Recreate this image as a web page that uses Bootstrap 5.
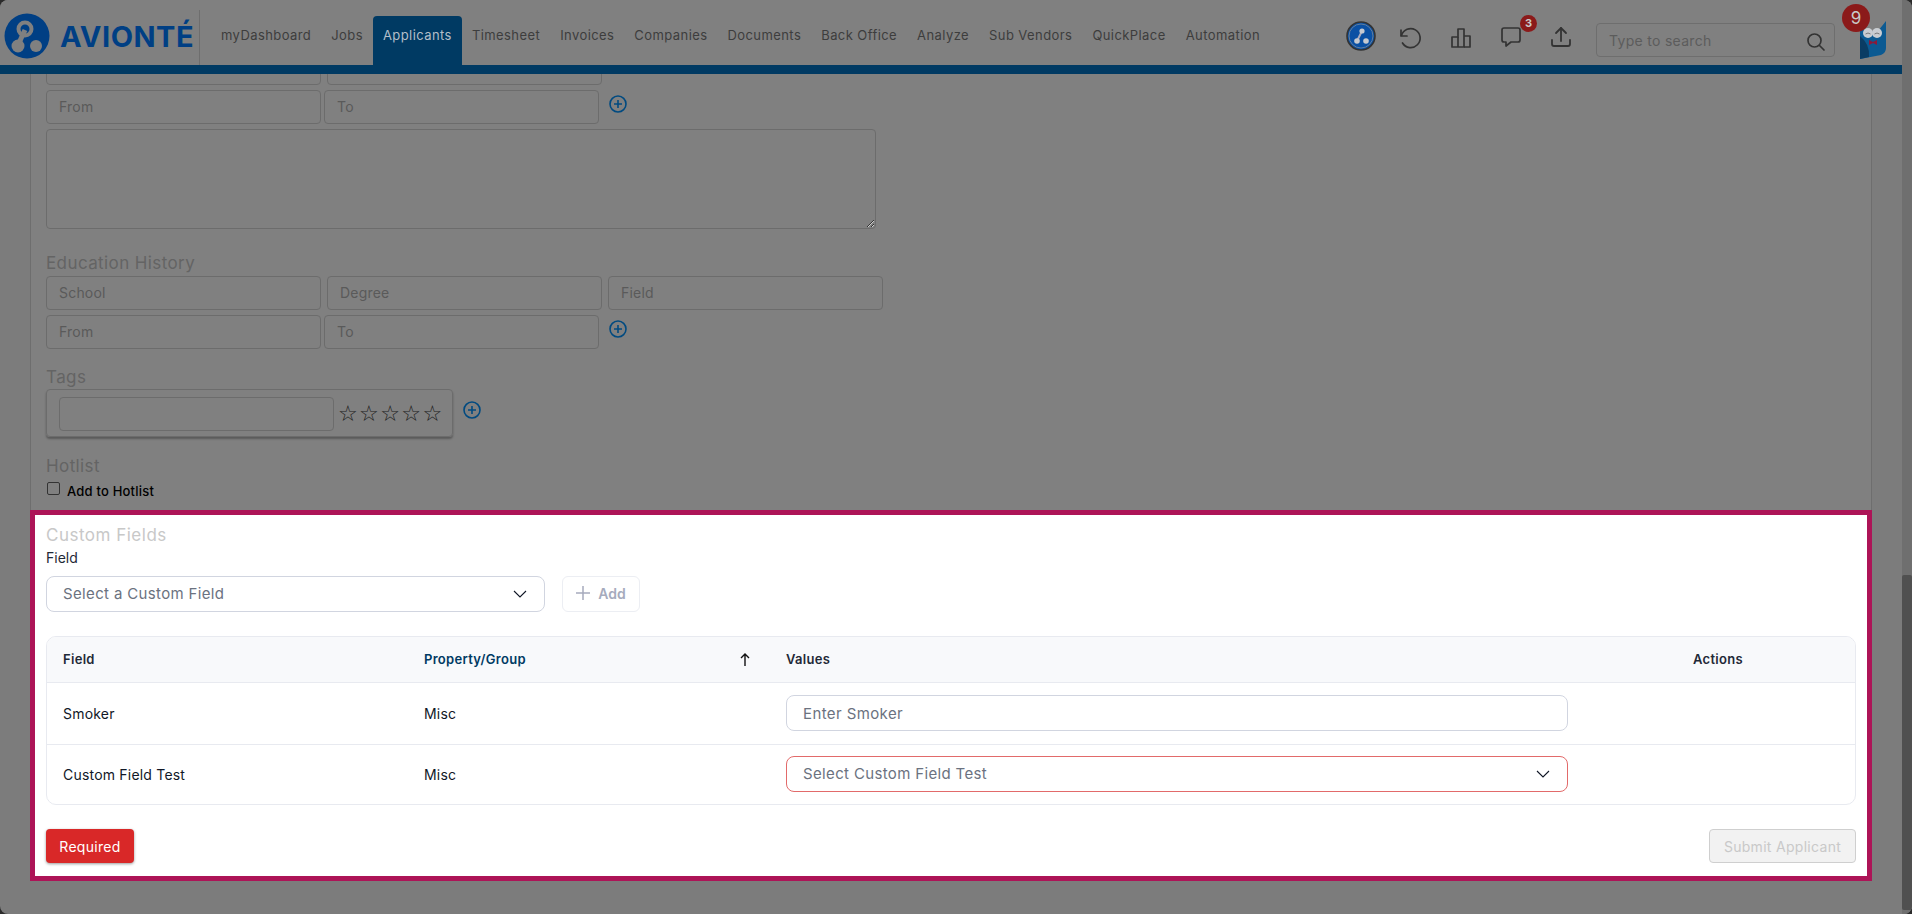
<!DOCTYPE html>
<html lang="en">
<head>
  <meta charset="UTF-8" />
  <meta name="viewport" content="width=device-width, initial-scale=1.0"/>
  <title>Avionté - Applicants</title>
  <link href="https://cdn.jsdelivr.net/npm/bootstrap@5.3.3/dist/css/bootstrap.min.css" rel="stylesheet">
  <style>
    html, body { height: 100%; margin: 0; overflow: hidden; }
    body { background: #2b2b2b; font-family: Inter, "Liberation Sans", sans-serif; font-size: 13px; }
    .app-window { height: 914px; border-radius: 8px; overflow: hidden; background: #7c7c7c; }
    .app-page { width: 1902px; height: 914px; }
    .scroll-track { width: 10px; height: 914px; background: #6f6f6f; }
    .scroll-thumb { height: 335px; margin-top: 575px; background: #505050; border-radius: 2px; }

    .top-bar { height: 74px; background: #808080; border-bottom: 9px solid #003a63; padding: 0; flex-wrap: nowrap; position: relative; }
    .brand-box { width: 200px; height: 55px; margin-top: 10px; border-right: 1px solid #6e6e6e; padding-left: 4px; padding-top: 3px; gap: 10px; }
    .brand-word { font-weight: 700; font-size: 29px; line-height: 46px; color: #003f84; letter-spacing: .5px; padding-top: 1px; }
    .main-links { margin-left: 11px; margin-top: 16px; height: 49px; flex-wrap: nowrap; }
    .main-links .nav-link { padding: 9px 10px 0; height: 49px; color: #3d3d3d; font-size: 13px; letter-spacing: .42px; line-height: 20px; white-space: nowrap; }
    .main-links .nav-link.active { background: #003a63; color: #b3bec9; border-radius: 4px 4px 0 0; }
    .tool-ico { position: absolute; }
    .search-box { position: absolute; left: 1596px; top: 23px; width: 239px; height: 34px; border: 1px solid #6e6e6e; border-radius: 4px; padding-left: 12px; line-height: 34px; font-size: 14px; letter-spacing: .3px; color: #5c5c5c; }
    .count-dot { position: absolute; background: #8b1a1a; color: #c9c9c9; border-radius: 50%; text-align: center; }

    .content-clip { height: 840px; overflow: hidden; }
    .form-panel { width: 1842px; margin-left: 30px; margin-top: -23px; padding-left: 15px; background: #808080; border-left: 1px solid #6e6e6e; border-right: 1px solid #6e6e6e; }
    .dim-input { width: 275px; height: 34px; border: 1px solid #6c6c6c; border-radius: 4px; padding-left: 12px; line-height: 32px; font-size: 14px; letter-spacing: .2px; color: #5a5a5a; background: #808080; }
    .gap-wide { gap: 6px; margin-bottom: 5px; }
    .gap-thin { gap: 3px; }
    .plus-ring { margin-left: 7px; margin-top: 5px; }
    .dim-area { display: block; width: 830px; height: 100px; margin-top: 5px; border: 1px solid #6c6c6c; border-radius: 4px; background: #808080; }
    .dim-title { height: 24px; line-height: 24px; font-size: 17px; letter-spacing: .4px; color: #646464; }
    .tag-box { width: 407px; height: 48px; border: 1px solid #6c6c6c; border-radius: 4px; box-shadow: 0 2px 2px #5a5a5a; padding: 7px 0 0 12px; }
    .star-row { font-size: 22px; line-height: 34px; color: #1c1c1c; letter-spacing: 1.4px; margin-left: 4px; font-family: "DejaVu Sans", sans-serif; }
    .dim-check { width: 13px; height: 13px; border: 1px solid #333; border-radius: 2px; margin: 2px 7px 0 1px; }
    .hot-label { font-size: 13px; font-weight: 500; letter-spacing: .2px; color: #000; line-height: 20px; padding-top: 1px; }

    .focus-box { width: 1842px; height: 371px; margin-left: -16px; margin-top: 11px; background: #fff; border: 5px solid #ad1457; padding: 8px 11px 0; }
    .focus-title { height: 24px; line-height: 24px; font-size: 17px; letter-spacing: .5px; color: #c8c8c8; }
    .field-label { height: 18px; line-height: 18px; margin-top: 2px; margin-bottom: 9px; font-size: 14px; color: #1f2937; }
    .pick-field { width: 499px; height: 36px; padding: 0 16px; border: 1px solid #d1d5e0; border-radius: 8px; font-size: 15px; letter-spacing: .35px; color: #6b7280; background-image: url("data:image/svg+xml,%3csvg xmlns='http://www.w3.org/2000/svg' viewBox='0 0 16 10'%3e%3cpath fill='none' stroke='%23111827' stroke-width='1.1' d='M2 2l6 6 6-6'/%3e%3c/svg%3e"); background-position: right 16px center; background-size: 16px 10px; box-shadow: none; font-family: inherit; }
    .add-btn { width: 78px; height: 36px; margin-left: 17px; border: 1px solid #eceef3; border-radius: 6px; background: #fff; color: #a6abbd; font-size: 14px; font-weight: 600; padding: 0 0 2px; gap: 8px; }
    .grid-wrap { margin-top: 24px; border: 1px solid #e8eaf0; border-radius: 10px; overflow: hidden; }
    .field-grid { table-layout: fixed; margin: 0; font-size: 14px; letter-spacing: .2px; color: #111827; }
    .field-grid th { height: 45px; padding: 0 16px; background: #f8f9fb; font-size: 13px; letter-spacing: .3px; font-weight: 600; color: #1f2937; border-bottom: 1px solid #e8eaf0; vertical-align: middle; }
    .field-grid th.sorted { color: #003a63; }
    .field-grid td { height: 62px; padding: 0 16px; vertical-align: middle; font-weight: 400; border-bottom: 1px solid #e8eaf0; }
    .field-grid tr:last-child td { border-bottom: 0; height: 60px; }
    .value-input { width: 782px; height: 36px; padding: 0 16px; border: 1px solid #d1d5e0; border-radius: 8px; font-size: 15px; letter-spacing: .4px; }
    .value-input::placeholder { color: #6b7280; }
    .value-select { width: 782px; border-color: #e26a6a; }
    .foot-row { margin-top: 24px; }
    .need-btn { width: 88px; height: 34px; padding: 0; background: #d92828; border: 0; border-radius: 4px; color: #fff; font-size: 14px; letter-spacing: .3px; box-shadow: 0 1px 3px rgba(0,0,0,.4); }
    .btn.send-btn:disabled { width: 147px; height: 34px; padding: 0; background: #f2f2f2; border: 1px solid #cfcfcf; border-radius: 4px; color: #c9c9c9; font-size: 14px; letter-spacing: .3px; opacity: 1; }
  </style>
</head>
<body>
  <div class="app-window d-flex">
    <div class="app-page">
      <header class="navbar top-bar align-items-start justify-content-start">
        <div class="brand-box d-flex align-items-start">
          <svg width="46" height="46" viewBox="0 0 46 46">
            <circle cx="23" cy="23" r="22.5" fill="#003f84"/>
            <path d="M21 17 L14 32" stroke="#808080" stroke-width="5"/>
            <circle cx="21" cy="16" r="6.5" fill="none" stroke="#808080" stroke-width="4"/>
            <circle cx="14" cy="33" r="6.5" fill="#808080"/>
            <circle cx="32" cy="33" r="6" fill="#808080"/>
          </svg>
          <span class="brand-word">AVIONTÉ</span>
        </div>
        <nav class="nav main-links">
          <a class="nav-link" href="#">myDashboard</a>
          <a class="nav-link" href="#">Jobs</a>
          <a class="nav-link active" href="#">Applicants</a>
          <a class="nav-link" href="#">Timesheet</a>
          <a class="nav-link" href="#">Invoices</a>
          <a class="nav-link" href="#">Companies</a>
          <a class="nav-link" href="#">Documents</a>
          <a class="nav-link" href="#">Back Office</a>
          <a class="nav-link" href="#">Analyze</a>
          <a class="nav-link" href="#">Sub Vendors</a>
          <a class="nav-link" href="#">QuickPlace</a>
          <a class="nav-link" href="#">Automation</a>
        </nav>

        <svg class="tool-ico" style="left:1346px;top:21px" width="30" height="30" viewBox="0 0 30 30">
          <circle cx="15" cy="15" r="14" fill="#0a50a4" stroke="#333" stroke-width="1.6"/>
          <circle cx="15" cy="15" r="12" fill="#0a50a4" stroke="#7a8a9a" stroke-width=".8"/>
          <path d="M16 10 L11 20" stroke="#aab" stroke-width="2"/>
          <circle cx="16" cy="10" r="2.6" fill="#c5c9d0"/>
          <circle cx="11" cy="20" r="2.8" fill="#c5c9d0"/>
          <circle cx="20" cy="20" r="2.8" fill="#c5c9d0"/>
        </svg>
        <svg class="tool-ico" style="left:1398px;top:26px" width="24" height="24" viewBox="0 0 24 24" fill="none" stroke="#333" stroke-width="1.7" stroke-linecap="round" stroke-linejoin="round">
          <path d="M3.5 9.5 A9.5 9.5 0 1 1 4.5 17"/>
          <path d="M3 4 V10 H9"/>
        </svg>
        <svg class="tool-ico" style="left:1450px;top:27px" width="22" height="22" viewBox="0 0 22 22" fill="none" stroke="#333" stroke-width="1.7" stroke-linejoin="round">
          <path d="M2 20 V10 H8 V2 H14 V20 Z"/>
          <path d="M8 10 V20"/>
          <path d="M14 9 H20 V20 H14"/>
        </svg>
        <svg class="tool-ico" style="left:1500px;top:25px" width="22" height="22" viewBox="0 0 22 22" fill="none" stroke="#333" stroke-width="1.7" stroke-linejoin="round">
          <path d="M4 3 H18 Q20 3 20 5 V15 Q20 17 18 17 H11 L6 21 V17 H4 Q2 17 2 15 V5 Q2 3 4 3 Z"/>
        </svg>
        <span class="count-dot" style="left:1520px;top:15px;width:17px;height:17px;font-size:11px;font-weight:700;line-height:17px">3</span>
        <svg class="tool-ico" style="left:1550px;top:26px" width="22" height="22" viewBox="0 0 22 22" fill="none" stroke="#333" stroke-width="1.8" stroke-linecap="round" stroke-linejoin="round">
          <path d="M11 15 V2"/>
          <path d="M6 7 L11 2 L16 7"/>
          <path d="M2 14 V18 Q2 20 4 20 H18 Q20 20 20 18 V14"/>
        </svg>
        <div class="search-box">Type to search</div>
        <svg class="tool-ico" style="left:1806px;top:32px" width="20" height="20" viewBox="0 0 20 20" fill="none" stroke="#333" stroke-width="1.7" stroke-linecap="round">
          <circle cx="8.5" cy="8.5" r="6.5"/>
          <path d="M13.5 13.5 L18 18"/>
        </svg>
        <svg class="tool-ico" style="left:1860px;top:20px" width="26" height="39" viewBox="0 0 26 39">
          <path d="M0 7 L5 11 H18 L26 1 V28 Q26 33 21 35 L0 39 Z" fill="#0c5a92"/>
          <path d="M0 16 Q10 24 9 37 L0 39 Z" fill="#0a3c64"/>
          <circle cx="8" cy="13" r="5" fill="#c9cdd2"/>
          <circle cx="17" cy="13" r="5" fill="#c9cdd2"/>
          <path d="M5.5 14 Q8 12 10.5 14 M14.5 14 Q17 12 19.5 14" stroke="#555" stroke-width=".7" fill="none"/>
          <path d="M9 20 L13 22 L17 20 V25 L13 23 L9 25 Z" fill="#8b1a3a"/>
        </svg>
        <span class="count-dot" style="left:1842px;top:4px;width:28px;height:28px;font-size:17px;line-height:28px">9</span>
      </header>

      <div class="content-clip">
        <section class="form-panel">
          <div class="d-flex gap-wide">
            <div class="dim-input"></div>
            <div class="dim-input"></div>
          </div>
          <div class="d-flex gap-thin">
            <div class="dim-input">From</div>
            <div class="dim-input">To</div>
            <svg class="plus-ring" width="18" height="18" viewBox="0 0 18 18" fill="none" stroke="#004a80" stroke-width="1.6">
              <circle cx="9" cy="9" r="8"/><path d="M9 5 V13 M5 9 H13"/>
            </svg>
          </div>
          <textarea class="dim-area"></textarea>

          <div class="dim-title" style="margin-top:22px;margin-bottom:1px">Education History</div>
          <div class="d-flex gap-wide">
            <div class="dim-input">School</div>
            <div class="dim-input">Degree</div>
            <div class="dim-input">Field</div>
          </div>
          <div class="d-flex gap-thin">
            <div class="dim-input">From</div>
            <div class="dim-input">To</div>
            <svg class="plus-ring" width="18" height="18" viewBox="0 0 18 18" fill="none" stroke="#004a80" stroke-width="1.6">
              <circle cx="9" cy="9" r="8"/><path d="M9 5 V13 M5 9 H13"/>
            </svg>
          </div>

          <div class="dim-title" style="margin-top:16px">Tags</div>
          <div class="d-flex">
            <div class="tag-box d-flex">
              <div class="dim-input"></div>
              <span class="star-row">☆☆☆☆☆</span>
            </div>
            <svg class="plus-ring" width="18" height="18" viewBox="0 0 18 18" fill="none" stroke="#004a80" stroke-width="1.6" style="margin-top:12px;margin-left:10px">
              <circle cx="9" cy="9" r="8"/><path d="M9 5 V13 M5 9 H13"/>
            </svg>
          </div>

          <div class="dim-title" style="margin-top:17px">Hotlist</div>
          <div class="d-flex" style="height:19px;margin-top:2px">
            <div class="dim-check"></div>
            <span class="hot-label">Add to Hotlist</span>
          </div>

          <div class="focus-box">
            <div class="focus-title">Custom Fields</div>
            <div class="field-label">Field</div>
            <div class="d-flex">
              <select class="form-select pick-field"><option>Select a Custom Field</option></select>
              <button class="btn add-btn d-flex align-items-center justify-content-center" type="button">
                <svg width="14" height="14" viewBox="0 0 14 14" stroke="#a6abbd" stroke-width="1.5"><path d="M7 0 V14 M0 7 H14"/></svg>
                Add
              </button>
            </div>
            <div class="grid-wrap">
              <table class="table field-grid">
                <colgroup><col style="width:361px"><col style="width:362px"><col style="width:907px"><col></colgroup>
                <thead>
                  <tr>
                    <th>Field</th>
                    <th class="sorted">
                      <div class="d-flex justify-content-between align-items-center">Property/Group
                        <svg class="me-1" width="10" height="13" viewBox="0 0 10 13" fill="none" stroke="#111" stroke-width="1.4"><path d="M5 13 V1 M1 5 L5 1 L9 5"/></svg>
                      </div>
                    </th>
                    <th>Values</th>
                    <th>Actions</th>
                  </tr>
                </thead>
                <tbody>
                  <tr>
                    <td>Smoker</td>
                    <td>Misc</td>
                    <td><input class="form-control value-input" type="text" placeholder="Enter Smoker"></td>
                    <td></td>
                  </tr>
                  <tr>
                    <td>Custom Field Test</td>
                    <td>Misc</td>
                    <td><select class="form-select pick-field value-select"><option>Select Custom Field Test</option></select></td>
                    <td></td>
                  </tr>
                </tbody>
              </table>
            </div>
            <div class="foot-row d-flex justify-content-between">
              <button class="btn need-btn" type="button">Required</button>
              <button class="btn send-btn" type="button" disabled>Submit Applicant</button>
            </div>
          </div>
        </section>
      </div>
    </div>
    <div class="scroll-track"><div class="scroll-thumb"></div></div>
  </div>
  <script src="https://cdn.jsdelivr.net/npm/bootstrap@5.3.3/dist/js/bootstrap.bundle.min.js"></script>
</body>
</html>
